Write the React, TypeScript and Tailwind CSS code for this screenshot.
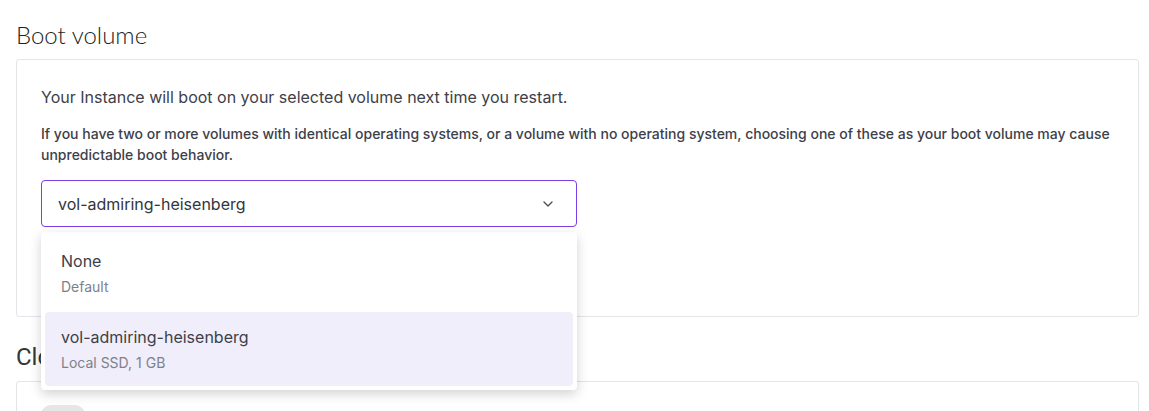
import { ChevronDown } from "lucide-react";

const options = [
  { label: "None", sub: "Default", selected: false },
  { label: "vol-admiring-heisenberg", sub: "Local SSD, 1 GB", selected: true },
];

export default function App() {
  return (
    <div className="h-[411px] overflow-hidden bg-white pt-[20px] pr-[10px] pl-4 font-['Inter',sans-serif] text-[#32363c]">
      <h2 className="font-['Lato',sans-serif] text-[24px] leading-[30px] font-light text-[#1c1f26]">Boot volume</h2>
      <div className="mt-[9px] rounded-[3px] border border-[#e3e5e8] px-6 pt-[25px] pb-[89px]">
        <p className="text-[16px] leading-[24px] text-[#3d4049]">Your Instance will boot on your selected volume next time you restart.</p>
        <p className="mt-[14px] text-[14px] leading-[21px] font-medium text-[#3d4049]">
          If you have two or more volumes with identical operating systems, or a volume with no operating system, choosing one of these as your boot volume may cause unpredictable boot behavior.
        </p>
        <div className="relative mt-[15px] w-[536px]">
          <button
            type="button"
            className="flex h-[47px] w-full items-center justify-between rounded-[4px] border border-[#7b3fe4] px-4 text-[16px] text-[#32363c]"
          >
            <span>vol-admiring-heisenberg</span>
            <ChevronDown className="mr-[4px] h-4 w-4 text-[#4b4f57]" strokeWidth={2} />
          </button>
          <ul className="absolute top-[52px] left-0 z-10 flex w-full flex-col gap-[2px] rounded-[4px] bg-white p-1 shadow-[0_4px_12px_rgba(0,0,0,0.18)]">
            {options.map((o) => (
              <li
                key={o.label}
                className={`flex h-[74px] flex-col justify-center rounded-[4px] px-4 ${o.selected ? "bg-[#efeefa]" : ""}`}
              >
                <span className="text-[16px] leading-[24px] text-[#3d4049]">{o.label}</span>
                <span className="mt-[4px] text-[14px] leading-[20px] text-[#7e818a]">{o.sub}</span>
              </li>
            ))}
          </ul>
        </div>
      </div>
      <h2 className="mt-[24px] font-['Roboto',sans-serif] text-[24px] leading-[32px] text-[#32363c]">Clone</h2>
      <div className="mt-[8px] h-[60px] rounded-[3px] border border-[#e3e5e8] px-6 pt-[23px]">
        <div className="h-[20px] w-[44px] rounded-full bg-[#e6e6e6]" />
      </div>
    </div>
  );
}
